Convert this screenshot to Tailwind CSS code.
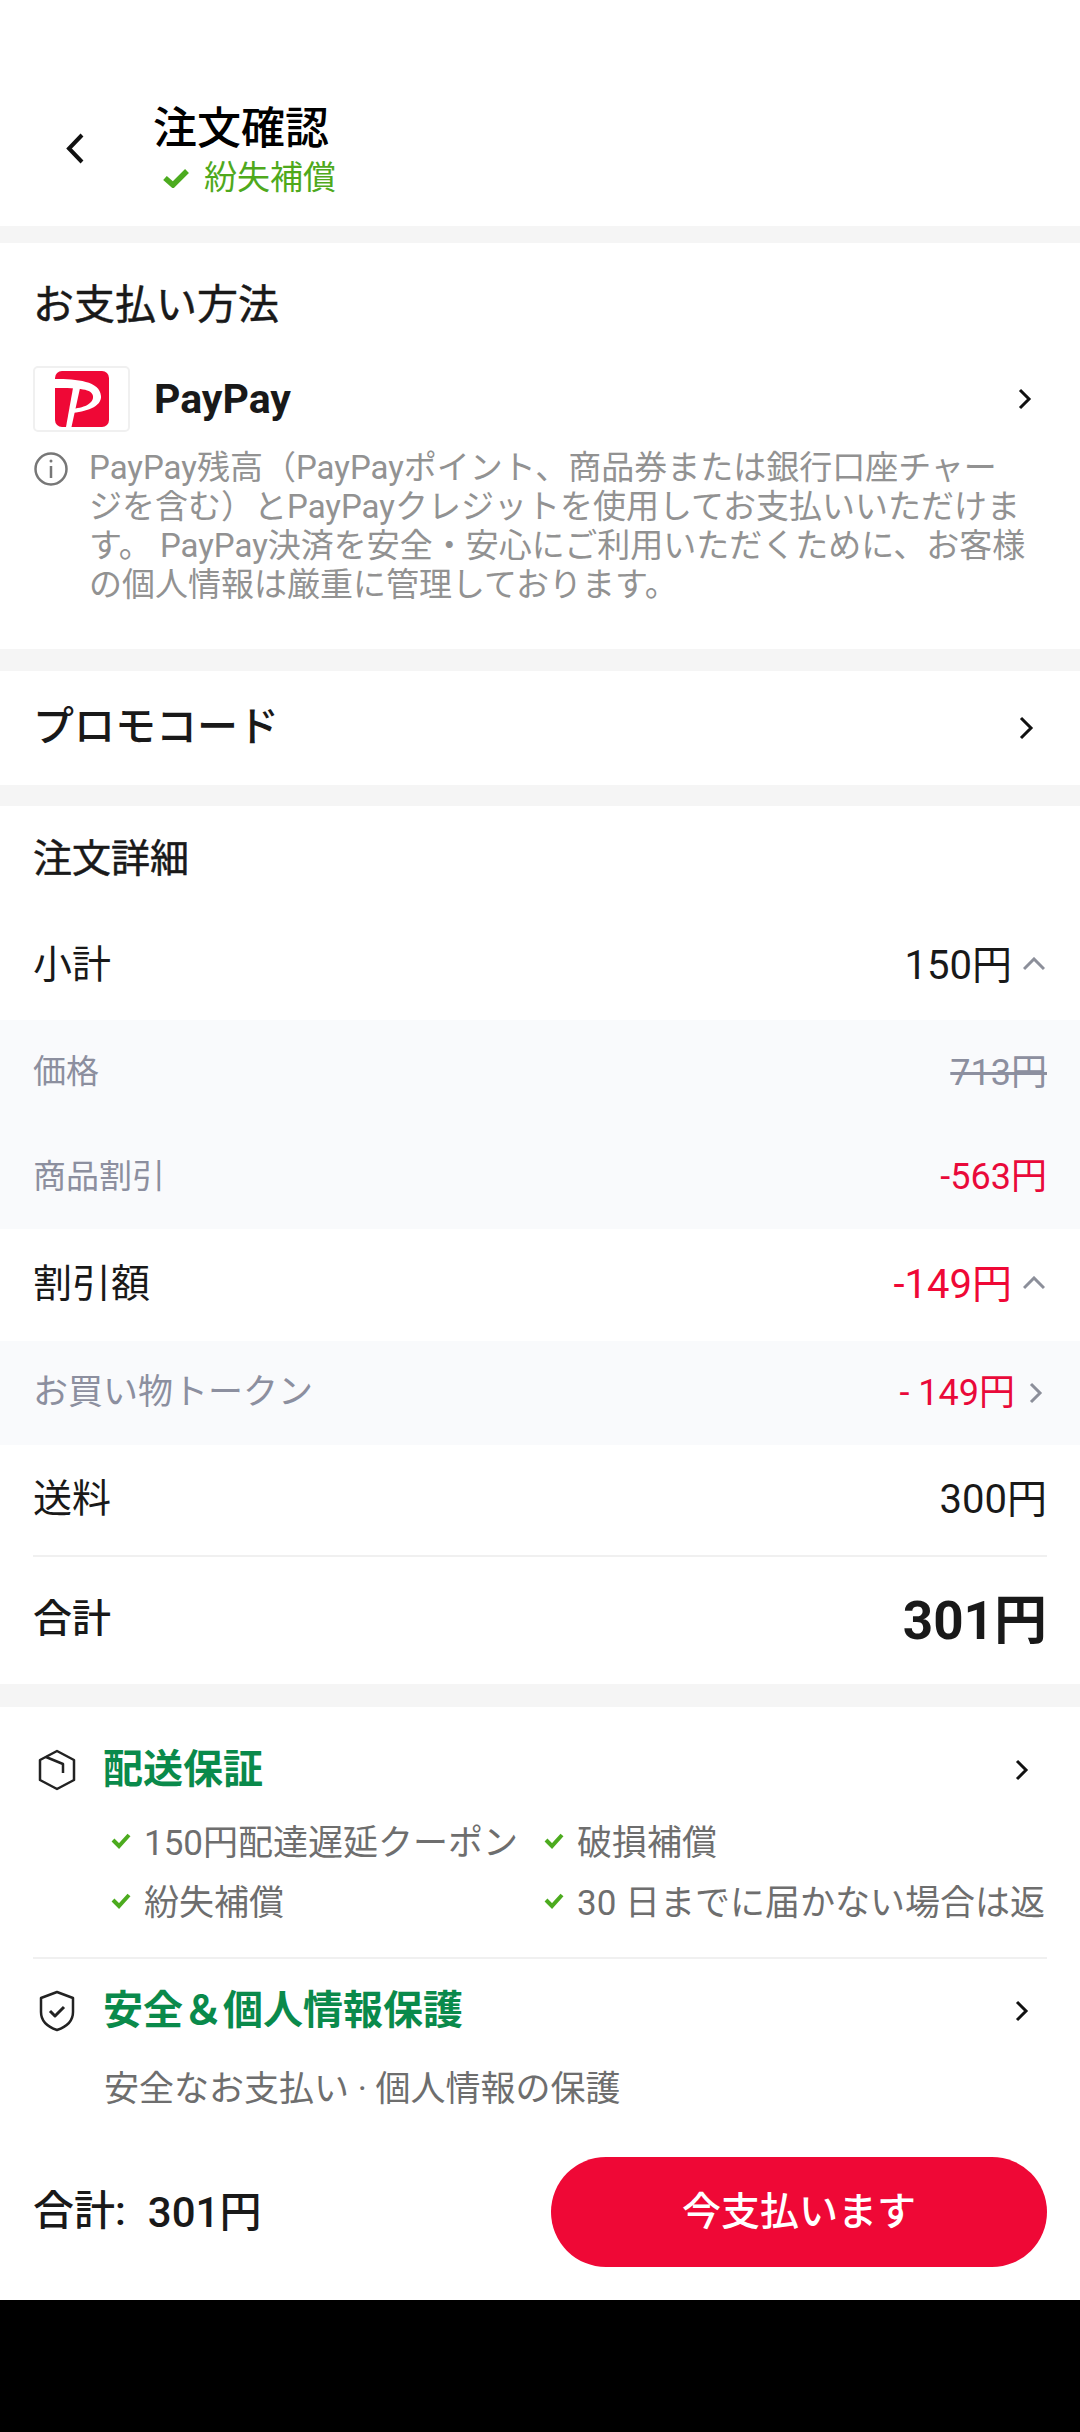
<!DOCTYPE html>
<html lang="ja"><head><meta charset="utf-8">
<script src="https://cdn.jsdelivr.net/npm/@tailwindcss/browser@4"></script>
</head>
<body class="m-0 bg-black">
<div class="w-[1080px] h-[2432px] flex flex-col font-['Roboto','Noto_Sans_CJK_JP',sans-serif] text-[#191919] overflow-hidden">
  <div class="h-[2300px] bg-white flex flex-col shrink-0">
    <!-- header -->
    <header class="h-[226px] pt-[101px] flex shrink-0">
      <div class="w-[153px] pl-[62px] pt-[31px]">
        <svg width="30" height="34" viewBox="0 0 30 34" fill="none" stroke="#111" stroke-width="4"><path d="M20 3 L7 16.500 L20 30"/></svg>
      </div>
      <div class="flex flex-col">
        <div class="text-[44px] leading-[56px] font-medium text-black">注文確認</div>
        <div class="flex items-center h-[42px] pl-[10px]">
          <svg width="26" height="20" viewBox="0 0 26 20" fill="none" stroke="#4cab1f" stroke-width="5.500"><path d="M2 10 L10 17 L24 3"/></svg>
          <span class="ml-[15px] text-[33px] leading-[42px] text-[#4fa91c]">紛失補償</span>
        </div>
      </div>
    </header>
    <div class="h-[17px] bg-[#f5f5f5] shrink-0"></div>
    <!-- payment -->
    <section class="h-[406px] px-[33px] shrink-0">
      <h2 class="pt-[33px] text-[41px] leading-[58px] font-normal [-webkit-text-stroke:0.5px_#191919]">お支払い方法</h2>
      <div class="flex items-center mt-[32px] h-[65px]">
        <div class="w-[97px] h-[66px] border-2 border-[#f0f0f0] rounded-[5px] flex items-center justify-center">
          <svg width="54" height="56" viewBox="0 0 54 56"><rect width="54" height="56" rx="7" fill="#ef0836"/><path fill="#fff" d="M0 8 C22 8 45 10 46 25 C47 36 30 41 16 42 L16.500 38 C28 37 39 33 38 25 C37 18 25 17 0 17 Z"/><path fill="#fff" d="M18 17 L25 17 L16.500 56 L11 56 Z"/></svg>
        </div>
        <span class="ml-[24px] text-[41px] font-bold leading-[48px]">PayPay</span>
        <svg class="ml-auto mr-[14px]" width="16" height="24" viewBox="0 0 16 24" fill="none" stroke="#111" stroke-width="3"><path d="M3 3 L12 12 L3 21"/></svg>
      </div>
      <div class="flex mt-[17px]">
        <svg class="shrink-0 mt-[3px]" width="36" height="36" viewBox="0 0 36 36" fill="none" stroke="#777" stroke-width="2.500"><circle cx="18" cy="18" r="15.500"/><path d="M18 15 V27"/><circle cx="18" cy="10" r="1.500" fill="#777" stroke="none"/></svg>
        <p class="ml-[20px] text-[33px] leading-[39px] text-[#929292] whitespace-nowrap">PayPay残高（PayPayポイント、商品券または銀行口座チャー<br>ジを含む）とPayPayクレジットを使用してお支払いいただけま<br>す。 PayPay決済を安全・安心にご利用いただくために、お客様<br>の個人情報は厳重に管理しております。</p>
      </div>
    </section>
    <div class="h-[22px] bg-[#f5f5f5] shrink-0"></div>
    <!-- promo -->
    <div class="h-[114px] px-[33px] flex items-center justify-between shrink-0">
      <span class="text-[41px] font-medium">プロモコード</span>
      <svg class="mr-[11px]" width="18" height="26" viewBox="0 0 18 26" fill="none" stroke="#111" stroke-width="3"><path d="M3 3 L13 13 L3 23"/></svg>
    </div>
    <div class="h-[21px] bg-[#f5f5f5] shrink-0"></div>
    <!-- order details -->
    <section class="shrink-0">
      <h2 class="h-[106px] px-[33px] flex items-center text-[39px] font-normal [-webkit-text-stroke:0.5px_#191919]">注文詳細</h2>
      <div class="h-[108px] px-[33px] flex items-center justify-between">
        <span class="text-[39px] -mt-[2px]">小計</span>
        <span class="flex items-center text-[40px]">150円<svg class="ml-[11px] mr-[2px] -mt-[4px]" width="22" height="14" viewBox="0 0 22 14" fill="none" stroke="#8c8f9a" stroke-width="3"><path d="M1 12 L11 2 L21 12"/></svg></span>
      </div>
      <div class="h-[209px] px-[33px] bg-[#f9fafc] flex flex-col">
        <div class="h-[104px] flex items-center justify-between text-[#8c8f9f]"><span class="text-[33px]">価格</span><span class="text-[36px] line-through mt-[2px]">713円</span></div>
        <div class="h-[105px] flex items-center justify-between"><span class="text-[33px] text-[#8c8f9f]">商品割引</span><span class="text-[36px] text-[#e9093a]">-563円</span></div>
      </div>
      <div class="h-[112px] px-[33px] flex items-center justify-between">
        <span class="text-[39px] -mt-[2px]">割引額</span>
        <span class="flex items-center text-[40px] text-[#ef0836]">-149円<svg class="ml-[11px] mr-[2px] -mt-[4px]" width="22" height="14" viewBox="0 0 22 14" fill="none" stroke="#8c8f9a" stroke-width="3"><path d="M1 12 L11 2 L21 12"/></svg></span>
      </div>
      <div class="h-[104px] px-[33px] bg-[#f9fafc] flex items-center justify-between">
        <span class="text-[35px] text-[#8c8f9f]">お買い物トークン</span>
        <span class="flex items-center text-[36px] text-[#e9093a]">- 149円<svg class="ml-[14px] mr-[4px]" width="14" height="24" viewBox="0 0 14 24" fill="none" stroke="#8c8f9a" stroke-width="3"><path d="M2 3 L11 12 L2 21"/></svg></span>
      </div>
      <div class="mx-[33px] h-[112px] flex items-center justify-between border-b-2 border-[#f0f0f0]">
        <span class="text-[39px] -mt-[2px]">送料</span><span class="text-[40px]">300円</span>
      </div>
      <div class="mx-[33px] h-[127px] flex items-center justify-between">
        <span class="text-[39px] font-medium -mt-[2px]">合計</span><span class="text-[53px] font-bold mt-[2px]">301円</span>
      </div>
    </section>
    <div class="h-[23px] bg-[#f5f5f5] shrink-0"></div>
    <!-- guarantee -->
    <section class="px-[33px] shrink-0">
      <div class="flex items-center h-[62px] mt-[32px]">
        <svg class="ml-[4px]" width="40" height="42" viewBox="0 0 40 42" fill="none" stroke="#222" stroke-width="2.500" stroke-linejoin="round"><path d="M20 2 L37 11 V31 L20 40 L3 31 V11 Z"/><path d="M9 8 L26 15 V24"/></svg>
        <span class="ml-[26px] text-[40px] font-bold text-[#0a8a4b]">配送保証</span>
        <svg class="ml-auto mr-[17px]" width="16" height="24" viewBox="0 0 16 24" fill="none" stroke="#111" stroke-width="3"><path d="M3 3 L12 12 L3 21"/></svg>
      </div>
      <div class="grid grid-cols-[433px_1fr] pl-[78px] mt-[13px] text-[35px] leading-[60px] text-[#6e6e6e] whitespace-nowrap overflow-hidden">
        <div class="flex items-center"><svg class="-mt-[6px]" width="20" height="16" viewBox="0 0 20 16" fill="none" stroke="#4cab1f" stroke-width="4"><path d="M2 7 L8 13 L18 2"/></svg><span class="ml-[13px]">150円配達遅延クーポン</span></div>
        <div class="flex items-center"><svg class="-mt-[6px]" width="20" height="16" viewBox="0 0 20 16" fill="none" stroke="#4cab1f" stroke-width="4"><path d="M2 7 L8 13 L18 2"/></svg><span class="ml-[13px]">破損補償</span></div>
        <div class="flex items-center"><svg class="-mt-[6px]" width="20" height="16" viewBox="0 0 20 16" fill="none" stroke="#4cab1f" stroke-width="4"><path d="M2 7 L8 13 L18 2"/></svg><span class="ml-[13px]">紛失補償</span></div>
        <div class="flex items-center"><svg class="-mt-[6px]" width="20" height="16" viewBox="0 0 20 16" fill="none" stroke="#4cab1f" stroke-width="4"><path d="M2 7 L8 13 L18 2"/></svg><span class="ml-[13px]">30 日までに届かない場合は返</span></div>
      </div>
      <div class="h-[2px] bg-[#f0f0f0] mt-[23px]"></div>
      <div class="flex items-center h-[62px] mt-[21px]">
        <svg class="ml-[5px]" width="38" height="42" viewBox="0 0 38 42" fill="none" stroke="#222" stroke-width="2.500" stroke-linejoin="round"><path d="M19 2 L35 8 V22 C35 31 28 37 19 40 C10 37 3 31 3 22 V8 Z"/><path d="M12 21 L17 26 L26 17" stroke-width="3"/></svg>
        <span class="ml-[27px] text-[40px] font-bold text-[#0a8a4b]">安全＆個人情報保護</span>
        <svg class="ml-auto mr-[17px]" width="16" height="24" viewBox="0 0 16 24" fill="none" stroke="#111" stroke-width="3"><path d="M3 3 L12 12 L3 21"/></svg>
      </div>
      <div class="pl-[71px] mt-[18px] text-[35px] leading-[60px] text-[#6e6e6e]">安全なお支払い · 個人情報の保護</div>
    </section>
    <!-- footer -->
    <div class="mt-auto h-[143px] px-[33px] flex items-start justify-between shrink-0">
      <div class="flex items-center h-[110px] text-[41px] font-medium"><span>合計:</span><span class="ml-[22px] text-[42px]">301円</span></div>
      <button class="w-[496px] h-[110px] rounded-full bg-[#ef0836] text-white text-[39px] font-medium">今支払います</button>
    </div>
  </div>
  <div class="flex-1 bg-black"></div>
</div>
</body></html>
